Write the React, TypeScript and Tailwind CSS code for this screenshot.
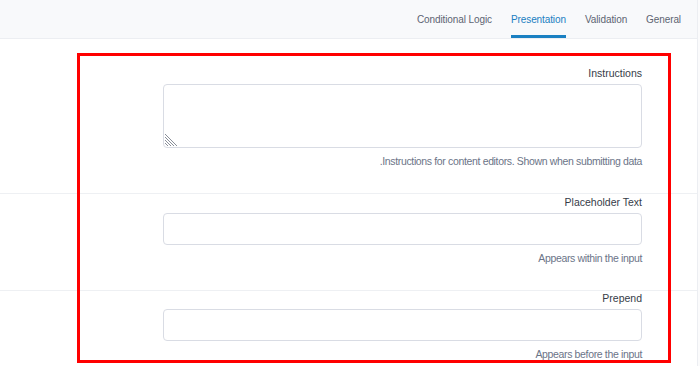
const font = { fontFamily: '"Liberation Sans", Arial, sans-serif' };

const tabs = ['Conditional Logic', 'Presentation', 'Validation', 'General'];

function ResizeGrip() {
  return (
    <svg className="absolute left-[1px] bottom-[1px]" width="12" height="12" viewBox="0 0 12 12">
      {[0, 3, 6, 9].map((k) => (
        <line key={k} x1="0" y1={k} x2={12 - k} y2="12" stroke="#8a8f99" strokeWidth="1" />
      ))}
    </svg>
  );
}

function Field({ label, help, tall, className }: { label: string; help: string; tall?: boolean; className: string }) {
  return (
    <div className={`flex flex-col items-end pr-[55px] ${className}`}>
      <div dir="rtl" className="text-[10.5px] leading-[14px] text-[#363c48] mb-[4px]">{label}</div>
      <div
        className={`relative w-[479px] rounded-[4px] border border-[#d9dce4] bg-white ${tall ? 'h-[64px]' : 'h-[32px]'}`}
      >
        {tall && <ResizeGrip />}
      </div>
      <div dir="rtl" className="text-[10.5px] leading-[14px] tracking-[-0.35px] text-[#6b7487] mt-[6px]">{help}</div>
    </div>
  );
}

export default function App() {
  return (
    <div className="relative w-[700px] h-[366px] overflow-hidden bg-white flex" style={font}>
      <div className="flex-1 flex flex-col">
        <div className="h-[39px] bg-[#f8f9fb] border-b border-[#eceef2] flex justify-end gap-[19px] pr-[16px]">
          {tabs.map((t) => (
            <div
              key={t}
              className={`flex items-center pt-[3px] text-[10px] tracking-[-0.1px] ${
                t === 'Presentation'
                  ? 'text-[#1a80c2] border-b-[3px] border-[#1a80c2]'
                  : 'text-[#5d6472] border-b-[3px] border-transparent'
              }`}
            >
              {t}
            </div>
          ))}
        </div>
        <Field
          className="pt-[27px] pb-[25px] border-b border-[#eef0f3]"
          label="Instructions"
          help="Instructions for content editors. Shown when submitting data."
          tall
        />
        <Field
          className="pt-[1px] pb-[25px] border-b border-[#eef0f3]"
          label="Placeholder Text"
          help="Appears within the input"
        />
        <Field className="pt-0" label="Prepend" help="Appears before the input" />
      </div>
      <div className="w-[3px] border-l border-[#eceef2] bg-[#fbfbfc]" />
      <div className="absolute left-[77px] top-[53px] w-[594px] h-[310px] border-[3px] border-[#ff0000] pointer-events-none" />
    </div>
  );
}
